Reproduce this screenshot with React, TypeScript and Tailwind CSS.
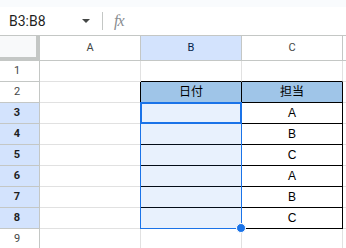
import React from "react";

const cols = ["A", "B", "C"];

// table body B2:C8
const rows: { n: number; b: string; c: string }[] = [
  { n: 1, b: "", c: "" },
  { n: 2, b: "日付", c: "担当" },
  { n: 3, b: "", c: "A" },
  { n: 4, b: "", c: "B" },
  { n: 5, b: "", c: "C" },
  { n: 6, b: "", c: "A" },
  { n: 7, b: "", c: "B" },
  { n: 8, b: "", c: "C" },
  { n: 9, b: "", c: "" },
];

const App: React.FC = () => {
  const isSel = (n: number) => n >= 3 && n <= 8;
  const inTable = (n: number) => n >= 2 && n <= 8;

  return (
    <div
      className="w-[346px] h-[248px] overflow-hidden bg-white relative"
      style={{ fontFamily: '"Liberation Sans", Arial, "Noto Sans CJK JP", sans-serif' }}
    >
      {/* top strip */}
      <div className="h-[7px] bg-[#f9fbfd]" />

      {/* Formula bar */}
      <div className="h-[29px] flex items-center border-b border-[#c4c7c5] bg-white">
        <div className="w-[76px] pl-[9px] text-[14px] text-[#1f1f1f] font-['Roboto',sans-serif] leading-none">
          B3:B8
        </div>
        <svg width="8" height="4" viewBox="0 0 8 4" className="ml-[6px]">
          <path d="M0 0 L8 0 L4 4 Z" fill="#444746" />
        </svg>
        <div className="ml-[12px] w-px h-[18px] bg-[#c4c7c5]" />
        <div className="ml-[11px] text-[16px] italic text-[#8a8d91] font-['Liberation_Serif',serif] leading-none tracking-[-1px]">
          fx
        </div>
      </div>

      {/* Grid */}
      <div className="relative">
        <div className="grid grid-cols-[40px_101px_101px_101px_1fr] grid-rows-[25px_repeat(9,21px)]">
          {/* header row */}
          <div className="bg-[#f8f9fa] border-r-4 border-b-4 border-[#c4c7c5]" />
          {cols.map((c) => (
            <div
              key={c}
              className={`flex items-center justify-center text-[11px] border-r border-b border-[#c4c7c5] font-['Roboto',sans-serif] ${
                c === "B" ? "bg-[#d3e3fd] text-[#041e49]" : "bg-white text-[#444746]"
              }`}
            >
              {c}
            </div>
          ))}
          <div className="border-b border-[#c4c7c5]" />

          {rows.map((r) => (
            <React.Fragment key={r.n}>
              <div
                className={`flex items-center justify-center pr-[5px] text-[11px] border-r border-b border-[#c4c7c5] font-['Roboto',sans-serif] ${
                  isSel(r.n) ? "bg-[#d3e3fd] text-[#1f1f1f] font-bold" : "bg-white text-[#444746]"
                }`}
              >
                {r.n}
              </div>
              {/* A */}
              <div
                className={`border-b border-[#e1e1e1] border-r ${
                  inTable(r.n) ? "border-r-black" : "border-r-[#e1e1e1]"
                }`}
              />
              {/* B */}
              <div
                className={`flex items-center justify-center text-[12px] text-black border-r border-b ${
                  inTable(r.n) ? "border-black" : r.n === 1 ? "border-r-[#e1e1e1] border-b-black" : "border-[#e1e1e1]"
                } ${r.n === 2 ? "bg-[#9fc5e8]" : ""}`}
              >
                {r.b}
              </div>
              {/* C */}
              <div
                className={`flex items-center justify-center text-[12px] text-black border-r border-b ${
                  inTable(r.n) ? "border-black" : r.n === 1 ? "border-r-[#e1e1e1] border-b-black" : "border-[#e1e1e1]"
                } ${r.n === 2 ? "bg-[#9fc5e8]" : ""}`}
              >
                {r.c}
              </div>
              <div className="border-b border-[#e1e1e1]" />
            </React.Fragment>
          ))}
        </div>

        {/* selection range B3:B8 */}
        <div className="absolute left-[140px] top-[66px] w-[102px] h-[127px] border border-[#1a73e8] bg-[#1a73e8]/10 pointer-events-none" />
        {/* active cell B3 */}
        <div className="absolute left-[140px] top-[66px] w-[102px] h-[22px] border-2 border-[#1a73e8] pointer-events-none" />
        {/* fill handle */}
        <div className="absolute left-[236px] top-[187px] w-[10px] h-[10px] rounded-full bg-[#1a73e8] border border-white" />
      </div>
    </div>
  );
};

export default App;
